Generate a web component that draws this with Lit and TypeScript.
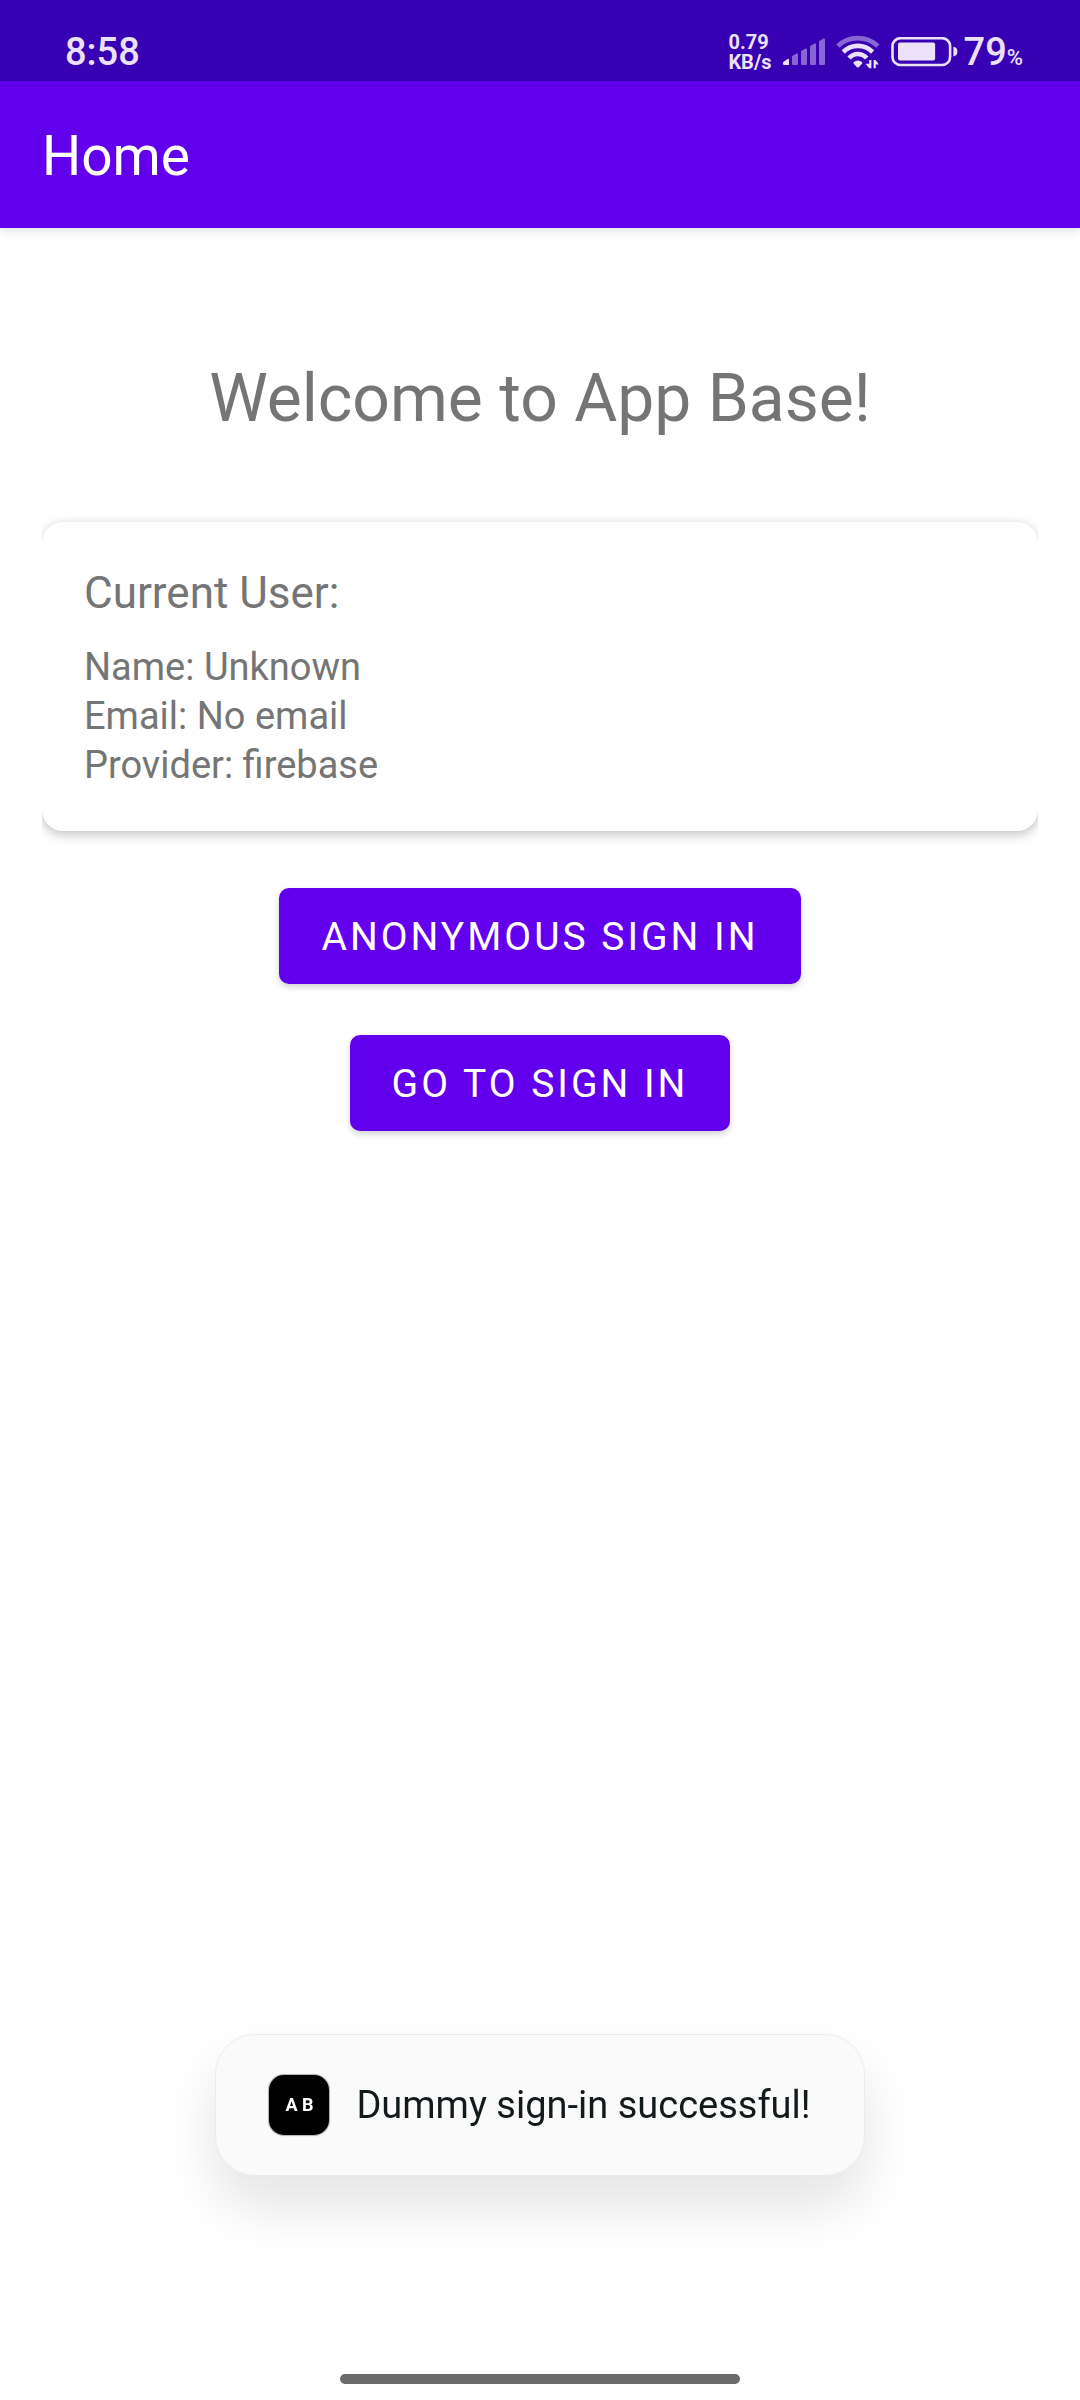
import { LitElement, css, html } from "lit";
import { customElement, property, state } from "lit/decorators.js";

@customElement("status-bar")
class StatusBar extends LitElement {
  @property() time = "";
  @property() rate = "";
  @property() unit = "";
  @property({ type: Number }) battery = 0;

  static styles = css`
    :host {
      display: flex;
      align-items: center;
      justify-content: space-between;
      box-sizing: border-box;
      height: 81px;
      padding: 22px 57px 0 65px;
      background: #3700b3;
      color: #ebe2fa;
      font-size: 38px;
      font-weight: 500;
      line-height: 44px;
    }
    .indicators {
      display: flex;
      align-items: center;
      gap: 11px;
    }
    .speed {
      font-size: 20px;
      font-weight: 700;
      line-height: 20px;
    }
    .speed span {
      display: block;
    }
    .power {
      display: flex;
      align-items: center;
      gap: 6px;
    }
    .percent {
      font-size: 22px;
      line-height: 22px;
    }
    svg {
      display: block;
      fill: currentColor;
    }
    .dim {
      opacity: 0.45;
    }
  `;

  render() {
    return html`
      <span>${this.time}</span>
      <div class="indicators">
        <div class="speed"><span>${this.rate}</span><span>${this.unit}</span></div>
        <svg width="42" height="28" viewBox="0 0 42 28" aria-hidden="true">
          <path d="M0 24.2L4.6 20.9Q6 20.2 6 21.8V27H1.2Q0 27 0 25.8Z" />
          <g class="dim">
            <path d="M9 18.2L13.4 15.6Q15 15 15 16.5V26Q15 27 14 27H10Q9 27 9 26Z" />
            <path d="M18 13.2L22.4 10.6Q24 10 24 11.5V26Q24 27 23 27H19Q18 27 18 26Z" />
            <path d="M27 8.2L31.4 5.6Q33 5 33 6.5V26Q33 27 32 27H28Q27 27 27 26Z" />
            <path d="M36 3.2L40.4 0.6Q42 0 42 1.5V26Q42 27 41 27H37Q36 27 36 26Z" />
          </g>
        </svg>
        <svg width="44" height="34" viewBox="0 0 44 34" aria-hidden="true">
          <g fill="none" stroke="currentColor" stroke-width="4.6">
            <path class="dim" d="M1.8 11.2C12.6 0.4 31 0.4 41.8 11.2" />
            <path d="M7.2 17C15.4 8.8 28.4 8.8 36.6 17" />
            <path d="M13 23C18.2 17.6 25.6 17.6 30.8 23" />
          </g>
          <path d="M17.6 27.2Q21.9 23.8 26.2 27.2Q26.8 28 26 28.8L22.8 32.2Q21.9 33 21 32.2L17.8 28.8Q17 28 17.6 27.2Z" />
          <path d="M33.2 25H35.4V33.2H33.2L29.6 28.8H33.2Z" />
          <path d="M37.6 25H39.6L42.8 29.4H39.8V33.2H37.6Z" />
        </svg>
        <div class="power">
          <svg width="67" height="30" viewBox="0 0 67 30" aria-hidden="true">
            <rect x="1.5" y="1.2" width="57.6" height="26.8" rx="8" fill="none" stroke="currentColor" stroke-width="2.6" />
            <rect x="7" y="5.6" width=${47 * (this.battery / 100)} height="18" rx="2" />
            <path d="M62.4 9.8Q66.4 10.2 66.4 14.6T62.4 19.4Z" />
          </svg>
          <span>${this.battery}<span class="percent">%</span></span>
        </div>
      </div>
    `;
  }
}

@customElement("user-card")
class UserCard extends LitElement {
  @property() name = "";
  @property() email = "";
  @property() provider = "";

  static styles = css`
    :host {
      display: block;
      padding: 42px;
      border-radius: 21px;
      background: #fff;
      box-shadow: 0 5px 12px rgba(0, 0, 0, 0.18), 0 0 10px rgba(0, 0, 0, 0.08);
      clip-path: inset(-30px 0);
      font-size: 38px;
      line-height: 49px;
    }
    h2 {
      margin: 0 0 21px;
      font-size: 44px;
      font-weight: 400;
      line-height: 58px;
    }
    p {
      margin: 0;
    }
    p:last-child {
      margin-bottom: -1px;
    }
  `;

  render() {
    return html`
      <h2>Current User:</h2>
      <p>Name: ${this.name}</p>
      <p>Email: ${this.email}</p>
      <p>Provider: ${this.provider}</p>
    `;
  }
}

@customElement("toast-message")
class ToastMessage extends LitElement {
  static styles = css`
    :host {
      position: fixed;
      bottom: 224px;
      left: 0;
      right: 0;
      display: flex;
      justify-content: center;
      pointer-events: none;
    }
    .toast {
      display: flex;
      align-items: center;
      gap: 27px;
      padding: 40px 53px;
      border: 1px solid #ebebeb;
      border-radius: 40px;
      background: #fafafa;
      box-shadow: 0 30px 60px rgba(0, 0, 0, 0.11);
      color: #121a1c;
      font-size: 38px;
      line-height: 44px;
    }
    .logo {
      display: grid;
      place-items: center;
      width: 60px;
      height: 60px;
      border-radius: 15px;
      background: #000;
      box-shadow: 0 0 1px 1px rgba(0, 0, 0, 0.3);
      color: #fff;
      font-size: 18px;
      font-weight: 700;
    }
  `;

  render() {
    return html`
      <div class="toast" role="status">
        <span class="logo">A B</span>
        <slot></slot>
      </div>
    `;
  }
}

@customElement("app-root")
class AppRoot extends LitElement {
  @state() private message = "Dummy sign-in successful!";

  static styles = css`
    :host {
      display: flex;
      flex-direction: column;
      min-height: 100vh;
      background: #fff;
      color: #757575;
      font-family: Roboto, "Noto Sans", sans-serif;
    }
    .app-bar {
      padding: 44px 42px 40px;
      background: #6200ee;
      box-shadow: 0 4px 10px rgba(0, 0, 0, 0.1);
      color: #fff;
    }
    .app-bar h1 {
      margin: 0;
      font-size: 55px;
      font-weight: 400;
      line-height: 63px;
    }
    main {
      flex: 1;
      display: flex;
      flex-direction: column;
      padding: 132px 42px 42px;
    }
    .welcome {
      margin: 0 0 84px;
      font-size: 66px;
      font-weight: 400;
      line-height: 78px;
      text-align: center;
    }
    .actions {
      display: flex;
      flex-direction: column;
      align-items: center;
      gap: 51px;
      margin-top: 57px;
    }
    button {
      padding: 25px 42px 23px;
      border: 0;
      border-radius: 10px;
      background: #6200ee;
      box-shadow: 0 3px 6px rgba(0, 0, 0, 0.18);
      color: #fff;
      font-family: inherit;
      font-size: 39px;
      letter-spacing: 3px;
      line-height: 48px;
      text-transform: uppercase;
      cursor: pointer;
    }
    .home-handle {
      align-self: center;
      width: 37%;
      height: 10px;
      margin-bottom: 16px;
      border-radius: 5px;
      background: #6b6b6b;
    }
  `;

  private signIn() {
    this.message = "Dummy sign-in successful!";
  }

  render() {
    return html`
      <status-bar time="8:58" rate="0.79" unit="KB/s" battery="79"></status-bar>
      <header class="app-bar"><h1>Home</h1></header>
      <main>
        <h2 class="welcome">Welcome to App Base!</h2>
        <user-card name="Unknown" email="No email" provider="firebase"></user-card>
        <div class="actions">
          <button type="button" @click=${this.signIn}>Anonymous Sign In</button>
          <button type="button">Go to Sign In</button>
        </div>
      </main>
      <div class="home-handle"></div>
      <toast-message>${this.message}</toast-message>
    `;
  }
}
